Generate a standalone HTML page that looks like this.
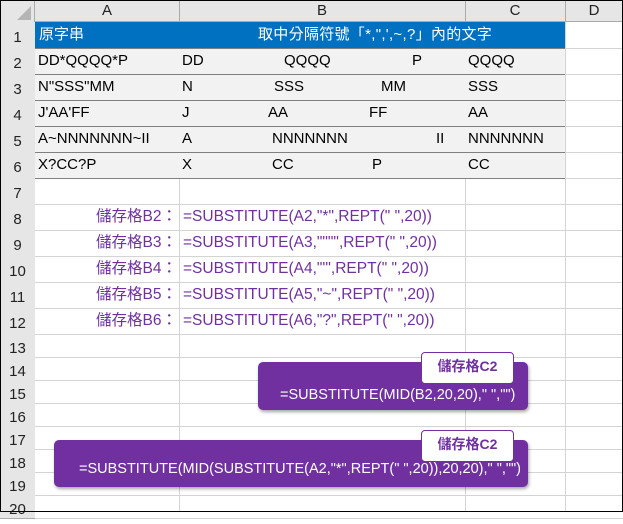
<!DOCTYPE html>
<html><head><meta charset="utf-8"><style>
body{margin:0;width:623px;height:512px;overflow:hidden;background:#fff;font-family:"Liberation Sans","Noto Sans CJK TC",sans-serif;position:relative}
.a{position:absolute;box-sizing:border-box}
.t{position:absolute;font-size:15px;white-space:nowrap;line-height:26px}
.rh{position:absolute;left:0;width:35px;text-align:center;font-size:15px;color:#222;background:#e6e6e6}
.p{color:#7030a0;font-size:15.5px}
</style></head><body>
<div class="a" style="left:0;top:0;width:623px;height:22px;background:#e6e6e6;border-bottom:1px solid #ababab"></div>
<div class="a" style="left:0;top:0;width:35px;height:512px;background:#e6e6e6;border-right:1px solid #ababab"></div>
<svg class="a" style="left:16px;top:6px" width="15" height="14"><polygon points="15,0 15,14 1,14" fill="#b5b5b5"/></svg>
<div class="t" style="left:35px;width:144px;top:-2px;text-align:center;color:#222">A</div>
<div class="t" style="left:179px;width:286px;top:-2px;text-align:center;color:#222">B</div>
<div class="t" style="left:465px;width:100px;top:-2px;text-align:center;color:#222">C</div>
<div class="t" style="left:565px;width:58px;top:-2px;text-align:center;color:#222">D</div>
<div class="a" style="left:179px;top:0;width:1px;height:22px;background:#ababab"></div>
<div class="a" style="left:465px;top:0;width:1px;height:22px;background:#ababab"></div>
<div class="a" style="left:565px;top:0;width:1px;height:22px;background:#ababab"></div>
<div class="a" style="left:179px;top:178px;width:1px;height:334px;background:#d4d4d4"></div>
<div class="a" style="left:465px;top:178px;width:1px;height:334px;background:#d4d4d4"></div>
<div class="a" style="left:565px;top:22px;width:1px;height:490px;background:#d4d4d4"></div>
<div id="g"></div>
<div class="a" style="left:35px;top:22px;width:530px;height:26px;background:#0070c0"></div>
<div class="t" style="left:39px;top:22px;color:#fff">原字串</div>
<div class="t" style="left:258px;top:22px;color:#fff;letter-spacing:0.3px">取中分隔符號「*,",',~,?」內的文字</div>
<div class="a" style="left:35px;top:48px;width:530px;height:130px;background:#f2f2f2"></div>
<div class="a" style="left:35px;top:48px;width:530px;height:131px;border-top:1px solid #808080;border-bottom:1px solid #808080"></div>
<div class="a" style="left:35px;top:74px;width:530px;height:1px;background:#808080"></div>
<div class="a" style="left:35px;top:100px;width:530px;height:1px;background:#808080"></div>
<div class="a" style="left:35px;top:126px;width:530px;height:1px;background:#808080"></div>
<div class="a" style="left:35px;top:152px;width:530px;height:1px;background:#808080"></div>
<div class="t" style="left:38px;top:48px">DD*QQQQ*P</div><div class="t" style="left:182px;top:48px">DD</div><div class="t" style="left:284px;top:48px">QQQQ</div><div class="t" style="left:412px;top:48px">P</div><div class="t" style="left:468px;top:48px">QQQQ</div>
<div class="t" style="left:38px;top:74px">N"SSS"MM</div><div class="t" style="left:182px;top:74px">N</div><div class="t" style="left:274px;top:74px">SSS</div><div class="t" style="left:381px;top:74px">MM</div><div class="t" style="left:468px;top:74px">SSS</div>
<div class="t" style="left:38px;top:100px">J'AA'FF</div><div class="t" style="left:182px;top:100px">J</div><div class="t" style="left:268px;top:100px">AA</div><div class="t" style="left:369px;top:100px">FF</div><div class="t" style="left:468px;top:100px">AA</div>
<div class="t" style="left:38px;top:126px">A~NNNNNNN~II</div><div class="t" style="left:182px;top:126px">A</div><div class="t" style="left:272px;top:126px">NNNNNNN</div><div class="t" style="left:436px;top:126px">II</div><div class="t" style="left:468px;top:126px">NNNNNNN</div>
<div class="t" style="left:38px;top:152px">X?CC?P</div><div class="t" style="left:182px;top:152px">X</div><div class="t" style="left:272px;top:152px">CC</div><div class="t" style="left:372px;top:152px">P</div><div class="t" style="left:468px;top:152px">CC</div>
<div class="t p" style="left:35px;width:142px;text-align:right;top:204px">儲存格B2：</div><div class="t p" style="left:183px;top:204px">=SUBSTITUTE(A2,"*",REPT(" ",20))</div>
<div class="t p" style="left:35px;width:142px;text-align:right;top:230px">儲存格B3：</div><div class="t p" style="left:183px;top:230px">=SUBSTITUTE(A3,"""",REPT(" ",20))</div>
<div class="t p" style="left:35px;width:142px;text-align:right;top:256px">儲存格B4：</div><div class="t p" style="left:183px;top:256px">=SUBSTITUTE(A4,"'",REPT(" ",20))</div>
<div class="t p" style="left:35px;width:142px;text-align:right;top:282px">儲存格B5：</div><div class="t p" style="left:183px;top:282px">=SUBSTITUTE(A5,"~",REPT(" ",20))</div>
<div class="t p" style="left:35px;width:142px;text-align:right;top:308px">儲存格B6：</div><div class="t p" style="left:183px;top:308px">=SUBSTITUTE(A6,"?",REPT(" ",20))</div>
<div class="a" style="left:258px;top:362px;width:270px;height:48px;background:#7030a0;border-radius:5px;box-shadow:1px 2px 3px rgba(0,0,0,.35)"></div>
<div class="t" style="left:280px;top:382px;color:#fff;font-size:14.5px">=SUBSTITUTE(MID(B2,20,20)," ","")</div>
<div class="a" style="left:421px;top:352px;width:93px;height:32px;background:#fff;border:1px solid #7030a0;border-radius:4px;color:#7030a0;font-size:14px;font-weight:bold;text-align:center;line-height:26px">儲存格C2</div>
<div class="a" style="left:54px;top:440px;width:474px;height:47px;background:#7030a0;border-radius:5px;box-shadow:1px 2px 3px rgba(0,0,0,.35)"></div>
<div class="t" style="left:79px;top:456px;color:#fff;font-size:14.5px">=SUBSTITUTE(MID(SUBSTITUTE(A2,"*",REPT(" ",20)),20,20)," ","")</div>
<div class="a" style="left:421px;top:430px;width:93px;height:32px;background:#fff;border:1px solid #7030a0;border-radius:4px;color:#7030a0;font-size:14px;font-weight:bold;text-align:center;line-height:26px">儲存格C2</div>
<div class="a" style="left:0;top:0;width:623px;height:512px;border:1px solid #000;pointer-events:none"></div>
<script>
var g=document.getElementById('g'),h='';
var tops=[22,48,74,100,126,152,178,204,230,256,282,308,334,357,380,403,426,449,472,495,518];
for(var i=0;i<20;i++){var t=tops[i],b=tops[i+1];
h+='<div class="a" style="left:35px;top:'+b+'px;width:588px;height:1px;background:#d4d4d4"></div>';
h+='<div class="a" style="left:0;top:'+b+'px;width:35px;height:1px;background:#ababab"></div>';
h+='<div class="rh" style="top:'+t+'px;height:'+(b-t)+'px;line-height:'+(b-t+6)+'px">'+(i+1)+'</div>';}
g.innerHTML=h;
</script>
</body></html>
